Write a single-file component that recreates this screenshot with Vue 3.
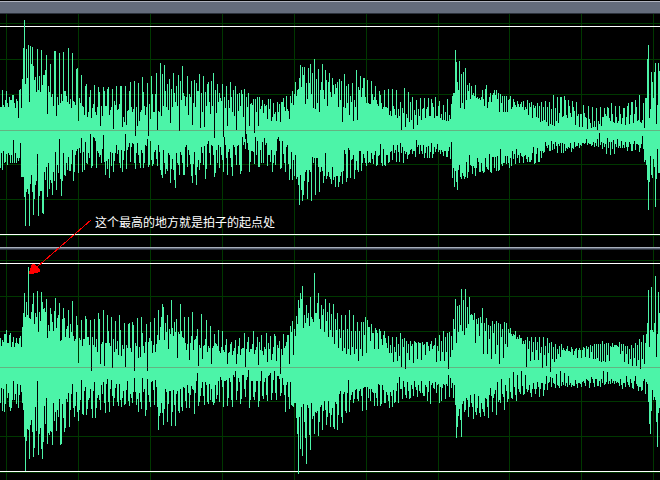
<script setup>
// Per-column sample peaks, measured outward from each channel's zero line.
const leftUp = [
  23,23,40,25,23,30,39,27,23,33, 30,30,35,35,27,22,31,29,12,40, 41,22,51,82,110,46,81,52,85,28,
  84,66,83,64,50,53,38,81,40,54, 38,80,45,55,55,60,75,16,44,38, 66,33,36,24,79,79,14,33,25,77,
  27,36,29,78,39,39,34,28,82,26, 31,22,77,29,28,25,61,62,9,32, 27,55,24,23,15,44,46,13,18,33,
  40,12,22,26,45,18,15,23,43,38, 4,24,14,43,39,24,24,41,43,15, 20,23,41,1,29,25,44,20,21,26,
  44,44,3,13,8,44,5,19,20,39, 48,23,18,21,49,-6,23,4,47,9, 18,20,53,38,24,15,23,47,-6,26,
  11,54,36,18,18,36,57,0,19,18, 67,14,56,24,65,39,23,46,20,51, 7,41,23,57,37,28,44,24,55,-1,
  49,30,64,37,34,24,33,54,15,36, 33,49,5,27,50,23,47,39,39,56, 2,37,18,54,3,38,24,46,48,28,
  16,49,24,57,-8,40,17,46,28,37,
  32,29,46,-7,33,22,44,4,30,22, 48,33,18,40,14,44,0,36,19,37, 24,40,36,13,41,-9,33,23,37,4,
  26,27,25,31,-3,31,18,33,4,33, 21,24,30,17,26,24,25,11,31,21, 31,9,13,27,16,18,9,28,18,26,
  8,28,28,32,23,19,34,21,19,11, 34,27,39,25,36,48,34,40,41,52, 65,43,63,55,63,26,47,31,62,47,
  66,36,57,22,71,21,51,27,61,18, 40,48,66,40,31,60,50,24,48,57, 38,33,52,45,36,46,42,48,23,51,
  30,49,8,23,56,22,44,27,46,15, 34,28,47,9,30,23,60,10,43,40, 54,33,42,52,52,33,27,50,27,26,
  26,49,36,30,33,44,30,26,24,39, 35,27,21,23,40,23,23,22,41,15, 19,14,41,24,21,15,40,12,21,14,
  28,0,22,17,42,3,16,12,38,8, 28,10,33,1,20,15,30,5,21,14, 32,10,21,22,32,12,21,23,32,14,
  14,31,27,23,12,33,14,14,24,29,
  12,16,10,25,10,18,9,31,9,15, 11,26,34,37,37,80,68,48,40,69, 22,56,27,58,21,62,30,45,39,47,
  31,44,35,37,34,45,32,33,31,32, 30,33,40,31,24,41,45,22,28,33, 37,28,35,37,40,35,40,31,37,18,
  36,27,34,18,34,18,34,18,30,31, 34,21,23,31,28,25,23,29,26,23, 26,28,23,29,20,23,21,30,15,27,
  23,28,12,25,22,24,13,27,12,24, 8,28,9,23,10,29,8,23,4,28, 6,21,5,35,4,22,9,33,7,17,
  33,33,13,14,34,30,15,12,30,24, 17,13,29,23,19,5,28,14,16,3, 16,16,3,25,17,13,12,1,24,11,
  7,2,23,3,9,3,22,0,9,6, 23,4,13,13,22,16,14,23,22,12, 9,27,16,8,7,24,13,7,9,24,
  16,6,12,22,22,5,13,24,27,6, 15,28,28,7,16,30,23,9,10,35, 8,7,10,27,2,32,32,71,85,12,
  21,58,48,32,58,67,6,25,67,59
]
const leftDown = [
  38,23,40,21,33,32,24,35,23,25, 33,25,33,10,33,23,33,28,31,28, 13,47,47,47,67,96,62,59,64,96,
  54,45,62,85,69,55,51,24,86,66, 61,61,83,84,42,50,37,67,33,59, 50,53,65,42,51,22,60,35,43,9,
  49,66,51,23,45,46,33,40,27,41, 41,34,20,51,42,25,21,19,43,18, 23,8,42,22,40,12,33,34,23,28,
  4,38,36,7,8,11,38,21,23,27, 25,33,19,5,32,45,31,39,29,48, 22,36,23,42,31,23,15,24,20,33,
  38,20,42,30,21,4,39,20,17,13, 32,17,13,14,33,39,23,13,25,33, 38,20,23,38,33,15,16,9,37,35,
  11,30,36,34,22,20,29,36,15,22, 40,45,48,20,33,44,39,41,23,25, 53,39,29,40,50,58,23,33,35,45,
  22,25,33,45,45,17,15,37,20,25, 34,46,53,34,22,45,55,37,30,40, 33,17,23,35,16,49,39,14,11,23,
  35,15,16,25,47,43,20,33,15,38,
  17,25,30,42,7,15,28,45,22,19, 28,37,46,15,17,25,35,16,15,35, 44,41,7,15,12,19,4,13,20,42,
  32,21,21,22,34,7,25,11,37,37, 20,33,12,33,8,15,13,36,25,25, 32,20,42,33,25,35,21,9,7,11,
  39,38,11,24,33,42,17,15,34,50, 39,22,50,30,46,25,49,47,55,75, 45,60,71,65,51,42,40,69,52,40,
  42,71,27,33,28,65,28,28,37,62, 42,37,41,53,46,23,49,46,42,47, 49,54,37,50,47,57,46,46,57,52,
  46,42,54,41,20,24,52,48,18,20, 48,30,29,25,49,40,31,40,42,21, 21,41,33,24,28,33,36,21,33,32,
  33,23,29,34,25,21,36,35,26,25, 14,33,36,19,35,36,25,25,33,32, 22,21,30,15,23,20,32,15,22,32,
  13,23,17,33,21,24,22,29,25,24, 20,19,24,21,21,27,10,17,15,24, 15,21,24,15,28,23,17,28,16,28,
  22,13,28,24,17,22,19,14,22,20,
  24,20,22,26,21,21,27,27,21,17, 29,12,48,38,57,41,52,60,40,35, 47,49,43,46,49,47,32,48,42,25,
  35,36,44,36,38,46,38,28,32,42, 42,33,41,43,42,28,37,39,40,24, 42,43,27,27,38,27,41,26,41,40,
  19,34,36,33,33,26,34,26,33,38, 28,36,21,29,24,34,19,28,25,33, 23,26,27,33,26,25,29,32,27,32,
  32,30,23,17,34,33,24,18,32,32, 21,28,21,23,22,12,16,18,15,21, 21,11,20,14,19,12,16,23,14,16,
  13,23,13,23,14,21,18,19,17,18, 13,22,18,19,12,17,16,16,13,18, 15,16,13,13,14,13,9,15,13,14,
  14,16,15,12,17,13,16,9,17,3, 15,12,19,13,17,14,24,8,18,12, 25,12,19,10,24,14,17,9,18,16,
  18,11,18,15,18,12,17,21,17,12, 14,21,21,14,11,20,14,14,15,22, 18,14,6,19,32,30,35,50,80,52,
  26,45,48,29,37,77,49,19,43,43
]
const rightUp = [
  29,21,27,25,33,33,37,24,24,32, 34,20,25,30,20,24,29,24,23,29, 31,20,40,54,74,50,65,52,100,49,
  48,55,63,74,43,54,50,76,35,55, 46,75,65,58,59,55,68,29,42,36, 59,53,45,36,56,69,39,49,52,64,
  26,27,48,59,49,30,38,41,57,29, 43,35,66,31,26,28,51,42,4,29, 27,47,21,28,28,51,48,30,30,22,
  47,-4,30,22,48,20,28,15,54,48, 3,23,25,57,1,24,24,52,36,24, 21,50,-1,28,15,46,18,26,12,52,
  37,11,22,18,44,0,22,19,43,44, 19,15,45,42,-4,24,21,49,9,20, 10,50,34,21,14,25,43,-4,25,29,
  45,26,14,22,49,15,23,32,57,27, 40,50,63,60,27,44,35,52,18,38, 33,67,39,31,45,35,48,9,35,33,
  63,36,30,29,50,24,17,23,50,7, 24,31,55,17,27,28,31,38,1,22, 19,53,8,21,22,28,47,15,21,19,
  41,3,19,21,33,24,23,21,37,16,
  14,20,36,17,15,22,28,3,14,15, 23,25,12,16,19,27,3,13,21,29, 12,18,19,19,34,0,18,25,30,15,
  18,18,23,36,13,17,20,30,2,25, 17,32,16,12,20,18,34,5,24,18, 31,7,13,20,33,31,6,22,19,26,
  -7,18,12,33,19,21,25,32,32,3, 41,35,46,12,38,31,51,43,67,59, 74,68,81,39,52,44,62,49,54,41,
  70,50,48,45,94,54,54,64,74,48, 38,62,52,58,35,68,46,55,30,64, 37,53,30,63,23,48,37,54,19,38,
  29,52,16,37,19,52,13,38,18,57, 12,36,20,52,13,36,18,45,6,36, 18,45,11,45,32,50,14,47,40,40,
  26,43,34,34,18,39,37,34,18,38, 36,28,22,32,36,29,24,19,31,14, 22,14,30,5,20,15,30,6,23,11,
  34,0,28,20,29,-2,26,14,23,7, 26,21,23,4,26,25,24,8,25,24, 24,7,25,22,23,12,25,25,21,16,
  23,26,18,21,22,29,5,21,16,32,
  6,26,15,36,6,30,15,34,-2,35, 10,31,17,48,38,68,24,61,35,62, 42,78,36,67,32,78,39,60,43,70,
  52,53,52,47,54,24,48,43,49,31, 50,44,59,13,44,36,49,13,42,28, 41,8,46,34,43,13,46,22,44,3,
  43,30,38,9,45,23,44,20,38,34, 39,33,31,33,32,36,28,30,28,32, 29,29,23,26,23,27,0,30,18,26,
  6,30,15,25,7,30,17,25,7,30, 14,20,-1,30,12,21,1,29,14,24, -5,25,8,20,5,23,8,18,13,21,
  10,23,17,19,17,16,18,21,16,16, 15,20,18,12,16,18,19,9,17,19, 17,9,17,20,19,10,21,18,20,9,
  22,15,21,8,23,8,23,9,23,6, 23,5,26,6,23,5,24,12,24,6, 21,20,24,20,22,22,22,21,20,25,
  13,23,16,23,5,21,13,21,3,18, 8,22,1,19,9,24,1,22,7,28, -2,25,8,32,3,24,33,44,77,20,
  37,80,37,35,44,91,10,33,75,54
]
const rightDown = [
  36,21,44,22,45,37,17,31,26,40, 44,41,33,14,33,27,37,17,41,28, 18,25,36,43,70,104,74,62,63,92,
  58,53,65,90,81,40,64,14,88,67, 61,82,92,75,39,57,31,77,66,68, 64,65,78,36,54,45,64,43,50,32,
  78,77,37,51,65,61,32,35,26,60, 43,27,17,41,50,39,25,45,54,43, 33,13,47,48,24,20,48,42,33,31,
  22,42,51,24,15,51,41,31,28,33, 43,18,27,15,36,46,17,12,35,45, 22,13,29,39,31,21,17,35,39,17,
  33,40,31,24,38,37,23,14,34,39, 27,31,36,25,11,25,38,32,45,26, 35,42,11,25,22,49,43,12,28,35,
  40,15,14,23,38,13,20,40,63,49, 46,36,46,58,42,22,25,55,37,24, 24,59,45,23,38,59,27,24,44,46,
  22,40,44,20,21,34,41,18,26,41, 28,19,22,23,47,26,14,6,39,35, 29,21,15,29,38,15,18,35,37,17,
  33,22,35,38,36,18,32,28,14,35,
  10,13,20,40,14,14,13,39,31,11, 15,33,40,8,10,4,33,24,11,15, 37,32,8,8,22,30,13,10,3,41,
  33,14,14,30,33,25,14,14,40,34, 14,4,29,32,15,11,28,34,9,8, 6,33,26,13,4,26,33,9,9,12,
  29,26,11,18,28,45,18,15,30,42, 15,38,39,40,36,36,51,67,107,50, 82,40,89,37,55,71,97,38,41,68,
  83,36,52,49,67,45,46,44,69,55, 40,38,63,44,34,43,58,50,34,46, 60,48,41,60,62,35,37,63,48,27,
  24,50,56,27,25,44,46,26,13,45, 33,28,25,36,32,23,22,32,34,24, 22,29,44,21,20,20,43,20,31,22,
  34,22,25,26,39,26,31,39,17,18, 39,37,18,23,36,36,25,28,34,41, 25,29,40,23,36,35,24,16,36,10,
  22,22,32,14,20,28,31,15,24,32, 31,18,22,29,14,20,23,30,18,24, 26,14,26,29,29,18,20,34,25,14,
  37,18,16,21,22,15,26,18,17,36,20,
  34,21,17,18,32,17,19,8,30,11, 21,16,31,18,38,71,60,49,42,53, 70,37,34,45,43,31,33,50,40,28,
  36,40,52,27,45,48,41,29,46,50, 36,42,45,49,31,32,40,51,28,21, 29,45,31,27,23,48,15,35,33,36,
  12,27,30,43,18,24,35,32,11,25, 31,32,5,20,28,34,8,22,25,27, 4,19,28,27,8,22,25,23,18,26,
  30,22,16,22,27,22,15,20,30,22, 16,16,29,23,17,9,23,16,15,10, 20,11,16,17,21,7,18,19,21,4,
  19,15,18,6,19,16,20,9,18,16, 20,18,19,19,13,17,21,16,16,17, 20,15,14,16,19,12,13,14,21,16,
  10,12,16,20,12,12,19,19,14,20, 12,16,4,18,17,15,5,17,14,17, 12,16,14,17,14,16,15,16,19,12,
  18,22,16,16,20,9,15,18,20,12, 16,21,22,14,9,17,19,24,20,20, 24,23,14,12,27,15,17,35,57,67,
  44,23,33,30,33,55,80,46,41,53
]

function tracePath(up, down) {
  return up
    .map((u, x) => `M${x} ${117 - u}h1V${117 + down[x]}h-1z`)
    .join('')
}

const gridColumns = [6, 78, 150, 222, 294, 366, 438, 509, 581, 653]
const gridRows = [10, 46, 81, 151, 186, 222]
const channels = [
  { id: 'left', path: tracePath(leftUp, leftDown) },
  { id: 'right', path: tracePath(rightUp, rightDown) }
]
</script>

<template>
  <main class="editor">
    <header class="range-bar"></header>
    <section class="tracks">
      <div v-for="channel in channels" :key="channel.id" class="channel">
        <svg class="wave" viewBox="0 0 660 234" preserveAspectRatio="none" shape-rendering="crispEdges">
          <rect v-for="x in gridColumns" :key="'c' + x" class="grid" :x="x" y="0" width="1" height="234" />
          <rect v-for="y in gridRows" :key="'r' + y" class="grid" x="0" :y="y" width="660" height="1" />
          <rect class="limit" x="0" y="13" width="660" height="1" />
          <rect class="limit" x="0" y="221" width="660" height="1" />
          <path class="trace" :d="channel.path" />
          <rect class="zero" x="0" y="117" width="660" height="1" />
        </svg>
      </div>
      <div class="note">
        <svg class="arrow" viewBox="0 0 64 56" shape-rendering="crispEdges">
          <path class="shaft" d="M63 1L9 48" />
          <path class="head" d="M1 55V53L4 45H6L12 51V53L4 55Z" />
        </svg>
        <span class="caption">这个最高的地方就是拍子的起点处</span>
      </div>
    </section>
  </main>
</template>

<style>
body {
  margin: 0;
  background: #000;
}
</style>

<style scoped>
.editor {
  display: flex;
  flex-direction: column;
  overflow: hidden;
  height: 100vh;
  background: #000;
}
.range-bar {
  position: relative;
  z-index: 1;
  box-sizing: border-box;
  flex: none;
  height: 13px;
  margin-top: 1px;
  border-top: 1px solid #b0b4c0;
  border-bottom: 1px solid #2c323c;
  background: #646c7c;
}
.tracks {
  position: relative;
  display: flex;
  flex-direction: column;
  flex: none;
  margin-top: -1px;
}
.channel + .channel {
  padding-top: 2px;
  border-top: 1px solid #a8b0bc;
  background: linear-gradient(#5c6474 0 1px, #2c323c 1px 2px, transparent 2px);
}
.wave {
  display: block;
  width: 100%;
  height: 234px;
}
.note {
  position: absolute;
  top: 201px;
  left: 28px;
  display: flex;
  gap: 3px;
}
.grid {
  fill: #003800;
}
.limit {
  fill: #fff;
}
.trace {
  fill: #4cf4a8;
}
.zero {
  fill: rgba(143, 57, 57, 0.35);
}
.arrow {
  width: 64px;
  height: 56px;
  margin-top: 5px;
}
.shaft {
  fill: none;
  stroke: #f00;
  stroke-width: 1;
}
.head {
  fill: #f00;
}
.caption {
  color: #fff;
  font: 12px/16px "Noto Sans CJK SC", sans-serif;
  white-space: nowrap;
}
</style>
